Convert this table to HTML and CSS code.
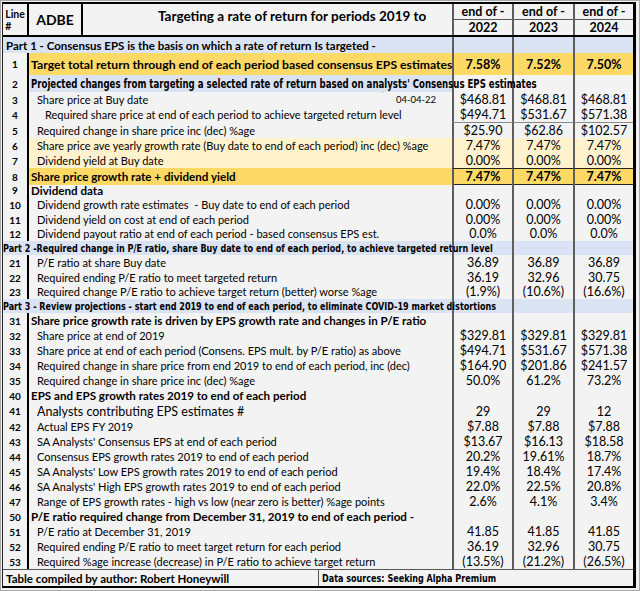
FILE: index.html
```html
<!DOCTYPE html>
<html>
<head>
<meta charset="utf-8">
<link rel="stylesheet" href="styles.css">
</head>
<body>
<div class="frame">
<div class="sheet">
  <div class="row head">
    <div class="c ln hln">Line<br>#</div>
    <div class="c tick">ADBE</div>
    <div class="c title">Targeting a rate of return for periods 2019 to</div>
    <div class="c d hd"><span>end of -</span><span>2022</span></div>
    <div class="c d hd"><span>end of -</span><span>2023</span></div>
    <div class="c d hd"><span>end of -</span><span>2024</span></div>
  </div>

  <div class="row part h16"><div class="c span3 p1">Part 1 - Consensus EPS is the basis on which a rate of return Is targeted -</div><div class="c d"></div><div class="c d"></div><div class="c d"></div></div>

  <div class="row gold h22"><div class="c ln">1</div><div class="c lb b big">Target total return through end of each period based consensus EPS estimates</div><div class="c d b">7.58%</div><div class="c d b">7.52%</div><div class="c d b">7.50%</div></div>

  <div class="row h17"><div class="c ln">2</div><div class="c lb blue ovf"><span class="narrow r2">Projected changes from targeting a selected rate of return based on analysts' Consensus EPS estimates</span></div><div class="c d"></div><div class="c d"></div><div class="c d"></div></div>

  <div class="row h15"><div class="c ln">3</div><div class="c lb i1 split"><span>Share price at Buy date</span><span class="date">04-04-22</span></div><div class="c d">$468.81</div><div class="c d">$468.81</div><div class="c d">$468.81</div></div>
  <div class="row h15"><div class="c ln">4</div><div class="c lb i2">Required share price at end of each period to achieve targeted return level</div><div class="c d">$494.71</div><div class="c d">$531.67</div><div class="c d">$571.38</div></div>
  <div class="row h16"><div class="c ln">5</div><div class="c lb i1">Required change in share price inc (dec) %age</div><div class="c d box">$25.90</div><div class="c d box">$62.86</div><div class="c d box">$102.57</div></div>
  <div class="row h15 pale"><div class="c ln">6</div><div class="c lb i1">Share price ave yearly growth rate (Buy date to end of each period) inc (dec) %age</div><div class="c d">7.47%</div><div class="c d">7.47%</div><div class="c d">7.47%</div></div>
  <div class="row h15 pale"><div class="c ln">7</div><div class="c lb i1">Dividend yield at Buy date</div><div class="c d">0.00%</div><div class="c d">0.00%</div><div class="c d">0.00%</div></div>
  <div class="row h15 gold2"><div class="c ln">8</div><div class="c lb b">Share price growth rate + dividend yield</div><div class="c d b dbox">7.47%</div><div class="c d b dbox">7.47%</div><div class="c d b dbox">7.47%</div></div>

  <div class="row h14"><div class="c ln">9</div><div class="c lb b">Dividend data</div><div class="c d"></div><div class="c d"></div><div class="c d"></div></div>
  <div class="row h15"><div class="c ln">10</div><div class="c lb i1">Dividend growth rate estimates &nbsp;- Buy date to end of each period</div><div class="c d">0.00%</div><div class="c d">0.00%</div><div class="c d">0.00%</div></div>
  <div class="row h14"><div class="c ln">11</div><div class="c lb i1">Dividend yield on cost at end of each period</div><div class="c d">0.00%</div><div class="c d">0.00%</div><div class="c d">0.00%</div></div>
  <div class="row h15"><div class="c ln">12</div><div class="c lb i1">Dividend payout ratio at end of each period - based consensus EPS est.</div><div class="c d">0.0%</div><div class="c d">0.0%</div><div class="c d">0.0%</div></div>
  <div class="row part h14"><div class="c span3 ovf p2"><span class="narrow">Part 2 -Required change in P/E ratio, share Buy date to end of each period, to achieve targeted return level</span></div><div class="c d"></div><div class="c d"></div><div class="c d"></div></div>
  <div class="row h15"><div class="c ln">21</div><div class="c lb i1">P/E ratio at share Buy date</div><div class="c d">36.89</div><div class="c d">36.89</div><div class="c d">36.89</div></div>
  <div class="row h14"><div class="c ln">22</div><div class="c lb i1">Required ending P/E ratio to meet targeted return</div><div class="c d">36.19</div><div class="c d">32.96</div><div class="c d">30.75</div></div>
  <div class="row h15"><div class="c ln">23</div><div class="c lb i1">Required change P/E ratio to achieve target return (better) worse %age</div><div class="c d">(1.9%)</div><div class="c d">(10.6%)</div><div class="c d">(16.6%)</div></div>
  <div class="row part h14"><div class="c span3 ovf p2"><span class="narrow">Part 3 - Review projections - start end 2019 to end of each period, to eliminate COVID-19 market distortions</span></div><div class="c d"></div><div class="c d"></div><div class="c d"></div></div>

  <div class="row h15"><div class="c ln">31</div><div class="c lb b">Share price growth rate is driven by EPS growth rate and changes in P/E ratio</div><div class="c d"></div><div class="c d"></div><div class="c d"></div></div>
  <div class="row h15"><div class="c ln">32</div><div class="c lb i1">Share price at end of 2019</div><div class="c d">$329.81</div><div class="c d">$329.81</div><div class="c d">$329.81</div></div>
  <div class="row h15"><div class="c ln">33</div><div class="c lb i1">Share price at end of each period (Consens. EPS mult. by P/E ratio) as above</div><div class="c d">$494.71</div><div class="c d">$531.67</div><div class="c d">$571.38</div></div>
  <div class="row h15"><div class="c ln">34</div><div class="c lb i1">Required change in share price from end 2019 to end of each period, inc (dec)</div><div class="c d">$164.90</div><div class="c d">$201.86</div><div class="c d">$241.57</div></div>
  <div class="row h15"><div class="c ln">35</div><div class="c lb i1">Required change in share price inc (dec) %age</div><div class="c d">50.0%</div><div class="c d">61.2%</div><div class="c d">73.2%</div></div>
  <div class="row h15"><div class="c ln">40</div><div class="c lb b">EPS and EPS growth rates 2019 to end of each period</div><div class="c d"></div><div class="c d"></div><div class="c d"></div></div>
  <div class="row h16"><div class="c ln">41</div><div class="c lb i1 lg">Analysts contributing EPS estimates #</div><div class="c d">29</div><div class="c d">29</div><div class="c d">12</div></div>
  <div class="row h15"><div class="c ln">42</div><div class="c lb i1">Actual EPS FY 2019</div><div class="c d">$7.88</div><div class="c d">$7.88</div><div class="c d">$7.88</div></div>
  <div class="row h15"><div class="c ln">43</div><div class="c lb i1">SA Analysts' Consensus EPS at end of each period</div><div class="c d">$13.67</div><div class="c d">$16.13</div><div class="c d">$18.58</div></div>
  <div class="row h15"><div class="c ln">44</div><div class="c lb i1">Consensus EPS growth rates 2019 to end of each period</div><div class="c d">20.2%</div><div class="c d">19.61%</div><div class="c d">18.7%</div></div>
  <div class="row h15"><div class="c ln">45</div><div class="c lb i1">SA Analysts' Low EPS growth rates 2019 to end of each period</div><div class="c d">19.4%</div><div class="c d">18.4%</div><div class="c d">17.4%</div></div>
  <div class="row h15"><div class="c ln">46</div><div class="c lb i1">SA Analysts' High EPS growth rates 2019 to end of each period</div><div class="c d">22.0%</div><div class="c d">22.5%</div><div class="c d">20.8%</div></div>
  <div class="row h15"><div class="c ln">47</div><div class="c lb i1">Range of EPS growth rates - high vs low (near zero is better) %age points</div><div class="c d up">2.6%</div><div class="c d up">4.1%</div><div class="c d up">3.4%</div></div>
  <div class="row h15"><div class="c ln">50</div><div class="c lb b">P/E ratio required change from December 31, 2019 to end of each period -</div><div class="c d"></div><div class="c d"></div><div class="c d"></div></div>
  <div class="row h15"><div class="c ln">51</div><div class="c lb i1">P/E ratio at December 31, 2019</div><div class="c d">41.85</div><div class="c d">41.85</div><div class="c d">41.85</div></div>
  <div class="row h15"><div class="c ln">52</div><div class="c lb i1">Required ending P/E ratio to meet target return for each period</div><div class="c d">36.19</div><div class="c d">32.96</div><div class="c d">30.75</div></div>
  <div class="row h15"><div class="c ln">53</div><div class="c lb i1">Required %age increase (decrease) in P/E ratio to achieve target return</div><div class="c d">(13.5%)</div><div class="c d">(21.2%)</div><div class="c d">(26.5%)</div></div>

  <div class="foot">
    <div class="fl">Table compiled by author: Robert Honeywill</div>
    <div class="fr"><span class="narrow">Data sources: Seeking Alpha Premium</span></div>
  </div>
</div>
</div>
</body>
</html>
```
FILE: styles.css
```css
* { box-sizing: border-box; }
html, body { margin: 0; padding: 0; background: #f2f2f2; }
body { width: 640px; height: 591px; overflow: hidden; font-family: Lato, "Open Sans", sans-serif; color: #000; }

.frame {
  width: 640px;
  height: 591px;
  border: 1px solid #a8a8a8;
  padding: 1px 2px 1px 1px;
  background: #f2f2f2;
}
.sheet {
  width: 634px;
  border-left: 1px solid #222;
  border-top: 2px solid #000;
  border-right: 3px solid #000;
  border-bottom: 2px solid #000;
  background: #f3f3f3;
}

.row {
  display: grid;
  grid-template-columns: 26px 423px 60px 61px 60px;
}
.c {
  display: flex;
  align-items: center;
  white-space: nowrap;
  overflow: visible;
  min-width: 0;
}
.ln {
  justify-content: center;
  font-weight: 700;
  font-size: 10px;
  border-right: 2px solid #000;
}
.lb { font-size: 11px; padding-left: 2px; }
.lb.b { font-weight: 700; font-size: 11.6px; }
.lb.big { font-size: 12.2px; }
.i1 { padding-left: 8px; }
.i2 { padding-left: 16px; }
.lg { font-size: 12.5px; }
.d {
  justify-content: center;
  font-size: 12.5px;
  border-left: 2px solid #5e5e5e;
}
.d.b { font-weight: 700; }
.up { align-items: flex-start; }

.h14 { height: 14px; }
.h15 { height: 15px; }
.h16 { height: 16px; }
.h17 { height: 17px; }
.h22 { height: 22px; }

/* header */
.head {
  grid-template-columns: 26px 54px 369px 60px 61px 60px;
  height: 33px;
  border-bottom: 2px solid #000;
}
.hln { flex-direction: column; justify-content: center; line-height: 12px; font-size: 10.5px; }
.tick { justify-content: center; font-weight: 700; font-size: 14px; border-right: 2px solid #000; }
.title { font-weight: 700; font-size: 13.5px; align-items: flex-start; padding: 4px 0 0 75px; }
.hd {
  flex-direction: column;
  align-items: stretch;
  font-weight: 700;
  font-size: 12.5px;
}
.hd span { flex: 1; display: flex; align-items: center; justify-content: center; }
.hd span:first-child { border-bottom: 1px solid #555; }

/* parts */
.part { background: #dae3f3; }
.span3 { grid-column: 1 / 3; font-weight: 700; }
.p1 { font-size: 11.5px; padding-left: 3px; }
.p2 { padding-left: 0; }
.narrow {
  display: inline-block;
  font-family: "DejaVu Sans Condensed", "Liberation Sans", sans-serif;
  font-weight: 700;
  font-size: 11px;
  transform: scaleX(0.815);
  transform-origin: left center;
}
.narrow.r2 { font-size: 11.5px; transform: scaleX(0.83); }
.ovf { position: relative; z-index: 1; }
.blue { background: #dae3f3; }

.gold .lb, .gold .d { background: #ffd966; }
.gold2 .lb, .gold2 .d { background: #ffd966; }
.pale .lb, .pale .d { background: #fff2cc; }

.box { border-top: 1px solid #8a8a8a; border-bottom: 1px solid #8a8a8a; }
.dbox { border-top: 1px solid #222; border-bottom: 1px solid #222; }

.split { justify-content: space-between; padding-right: 16px; }
.date {
  position: relative;
  font-size: 9.5px;
  padding-left: 14px;
}
.date::before {
  content: "";
  position: absolute;
  left: 0;
  top: -5px;
  width: 0;
  height: 0;
  border-top: 4px solid #2e7d32;
  border-right: 4px solid transparent;
}

/* footer */
.foot {
  display: flex;
  height: 17px;
  border-top: 1px solid #555;
}
.fl {
  width: 316px;
  font-weight: 700;
  font-size: 11.5px;
  padding-left: 3px;
  display: flex;
  align-items: center;
  border-right: 1px solid #555;
}
.fr {
  display: flex;
  align-items: center;
  padding-left: 3px;
}
```
